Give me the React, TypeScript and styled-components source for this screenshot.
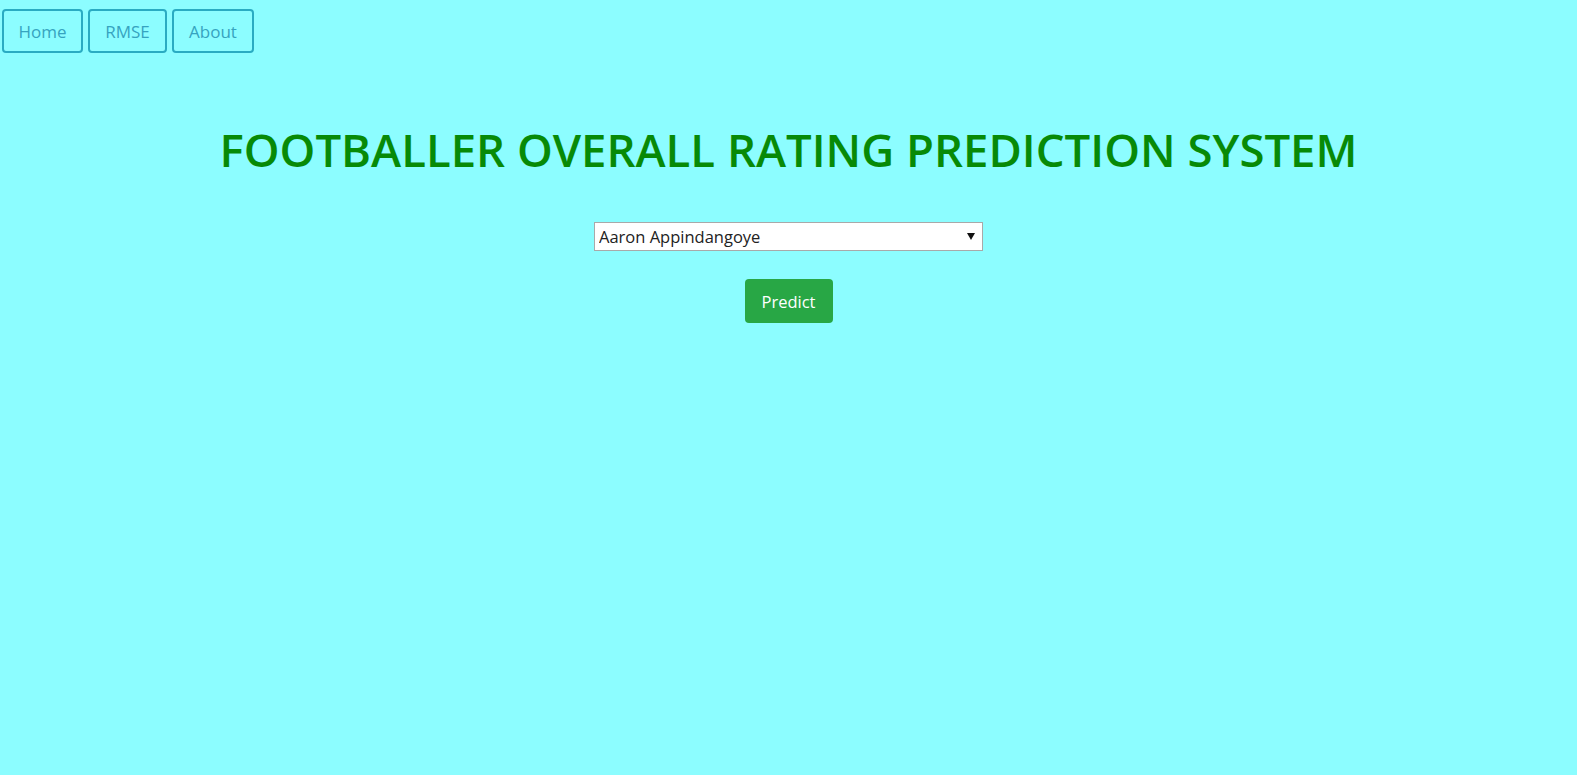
import styled, { createGlobalStyle } from "styled-components"

const GlobalStyle = createGlobalStyle`
    html, body {
        margin: 0;
        padding: 0;
        background-color: #8cfdff;
        font-family: "Open Sans", "Noto Sans", sans-serif;
    }
`

const Page = styled.div`
    min-height: 775px;
    display: flex;
    flex-direction: column;
`

const Nav = styled.nav`
    display: flex;
    column-gap: 5px;
    padding: 9px 2px 0;
`

const NavButton = styled.button<{ $w: number }>`
    width: ${p => p.$w}px;
    height: 44px;
    padding: 0;
    border: 2px solid #2aabc2;
    border-radius: 4px;
    background: transparent;
    color: #36a3c0;
    font-family: inherit;
    font-size: 17px;
    cursor: pointer;
`

const Main = styled.main`
    display: flex;
    flex-direction: column;
    align-items: center;
`

const Title = styled.h1`
    margin: 65px 0 0;
    color: #078a07;
    font-size: 45.5px;
    font-weight: 600;
`

const SelectWrap = styled.div`
    position: relative;
    margin-top: 42px;
    &::after {
        content: "";
        position: absolute;
        right: 8px;
        top: 11px;
        border-left: 4px solid transparent;
        border-right: 4px solid transparent;
        border-top: 7px solid #111;
        pointer-events: none;
    }
`

const Select = styled.select`
    appearance: none;
    display: block;
    width: 389px;
    height: 29px;
    border: 1px solid #a9a9a9;
    border-radius: 0;
    background: #fff;
    color: #222;
    font-family: inherit;
    font-size: 16.5px;
    padding: 0 4px;
`

const PredictButton = styled.button`
    margin-top: 28px;
    width: 88px;
    height: 44px;
    border: none;
    border-radius: 4px;
    background-color: #28a745;
    color: #fff;
    font-family: inherit;
    font-size: 16.5px;
    font-weight: 500;
    cursor: pointer;
`

export default function App() {
    return (
        <>
            <GlobalStyle />
            <Page>
                <Nav>
                    <NavButton $w={81}>Home</NavButton>
                    <NavButton $w={79}>RMSE</NavButton>
                    <NavButton $w={82}>About</NavButton>
                </Nav>
                <Main>
                    <Title>FOOTBALLER OVERALL RATING PREDICTION SYSTEM</Title>
                    <SelectWrap>
                        <Select defaultValue="Aaron Appindangoye">
                            <option>Aaron Appindangoye</option>
                            <option>Aaron Cresswell</option>
                            <option>Aaron Doran</option>
                        </Select>
                    </SelectWrap>
                    <PredictButton>Predict</PredictButton>
                </Main>
            </Page>
        </>
    )
}
